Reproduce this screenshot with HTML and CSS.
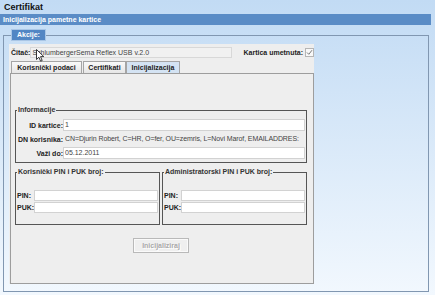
FILE: index.html
```html
<!DOCTYPE html>
<html lang="hr">
<head>
  <meta charset="UTF-8">
  <title>Certifikat</title>
  <link rel="stylesheet" href="styles.css">
</head>
<body>

  <div class="app-title">Certifikat</div>
  <div class="title-bar">Inicijalizacija pametne kartice</div>

  <fieldset class="actions">
    <legend class="actions-legend">Akcije:</legend>
    <div class="card-panel">

      <div class="reader-row">
        <span class="label">Čitač:</span>
        <span class="reader-field">SchlumbergerSema Reflex USB v.2.0</span>
        <span class="label inserted">Kartica umetnuta:</span>
        <span class="checkbox">
          <svg width="7" height="7" viewBox="0 0 7 7"><path d="M1 3.5 L2.8 5.3 L6 1.2" fill="none" stroke="#7a7a7a" stroke-width="1"/></svg>
        </span>
        <svg class="cursor" width="9" height="13" viewBox="0 0 9 13">
          <path d="M0.5 0.5 L0.5 10.5 L2.9 8.2 L4.6 12.2 L6.2 11.5 L4.5 7.6 L7.8 7.6 Z" fill="#fff" stroke="#222" stroke-width="0.9" stroke-linejoin="round"/>
        </svg>
      </div>

      <div class="tabs">
        <span class="tab tab-user">Korisnički podaci</span>
        <span class="tab tab-certs">Certifikati</span>
        <span class="tab tab-init active">Inicijalizacija</span>
      </div>

      <div class="tab-body">
        <fieldset class="group info">
          <legend>Informacije</legend>
          <div class="form-row">
            <span class="field-label">ID kartice:</span>
            <span class="input">1</span>
          </div>
          <div class="form-row">
            <span class="field-label">DN korisnika:</span>
            <span class="input readonly">CN=Djurin Robert, C=HR, O=fer, OU=zemris, L=Novi Marof, EMAILADDRES:</span>
          </div>
          <div class="form-row">
            <span class="field-label">Važi do:</span>
            <span class="input">05.12.2011</span>
          </div>
        </fieldset>

        <div class="pin-groups">
          <fieldset class="group pin">
            <legend>Korisnički PIN i PUK broj:</legend>
            <div class="form-row">
              <span class="pin-label">PIN:</span>
              <span class="input"></span>
            </div>
            <div class="form-row">
              <span class="pin-label">PUK:</span>
              <span class="input"></span>
            </div>
          </fieldset>
          <fieldset class="group pin">
            <legend>Administratorski PIN i PUK broj:</legend>
            <div class="form-row">
              <span class="pin-label">PIN:</span>
              <span class="input"></span>
            </div>
            <div class="form-row">
              <span class="pin-label">PUK:</span>
              <span class="input"></span>
            </div>
          </fieldset>
        </div>

        <button class="init-btn" disabled>Inicijaliziraj</button>
      </div>

    </div>
  </fieldset>

</body>
</html>
```

FILE: styles.css
```css
body {
  margin: 0;
  width: 435px;
  height: 295px;
  overflow: hidden;
  background: linear-gradient(#c2dbf4, #f2f8fe);
  font-family: "Liberation Sans", Arial, sans-serif;
  font-size: 7px;
  color: #222;
}

.app-title {
  height: 14px;
  line-height: 14px;
  padding-left: 4px;
  font-size: 9px;
  font-weight: bold;
  color: #111;
}

.title-bar {
  height: 11px;
  line-height: 11px;
  margin-right: 4px;
  padding-left: 3px;
  background: #5a8cc6;
  color: #fff;
  font-weight: bold;
}

.actions {
  margin: 4px 6px 0 3px;
  padding: 3px 0 7px 5px;
  border: 1px solid #8197b1;
  min-width: 0;
}

.actions-legend {
  margin-left: 2px;
  padding: 0 5px;
  height: 12px;
  line-height: 10px;
  box-sizing: border-box;
  background: #5286c4;
  border: 1px solid #a9c6e6;
  color: #fff;
  font-weight: bold;
}

.card-panel {
  position: relative;
  width: 305px;
  height: 240px;
  padding-top: 3px;
  box-sizing: border-box;
  background: #eeeeee;
  display: flex;
  flex-direction: column;
}

.label { font-weight: bold; }

.reader-row {
  display: flex;
  align-items: center;
  height: 11px;
  padding-left: 2px;
}

.reader-field {
  width: 202px;
  height: 11px;
  padding-left: 1px;
  box-sizing: border-box;
  background: #f1f1f1;
  border: 1px solid #d8d8d8;
  line-height: 9px;
  color: #444;
  white-space: nowrap;
}

.inserted { margin-left: 11px; }

.checkbox {
  width: 9px;
  height: 9px;
  margin-left: 2px;
  box-sizing: border-box;
  border: 1px solid #b5b5b5;
  background: #f8f8f8;
  display: flex;
}

.cursor {
  position: absolute;
  left: 27px;
  top: 5px;
}

.tabs {
  display: flex;
  height: 12px;
  margin-top: 3px;
  padding-left: 2px;
}

.tab {
  height: 12px;
  box-sizing: border-box;
  border: 1px solid #a5a5a5;
  border-bottom: none;
  background: linear-gradient(#f9f9f9, #e6e6e6);
  font-weight: bold;
  line-height: 11px;
  text-align: center;
}

.tab-user { width: 71px; margin-right: 1px; }
.tab-certs { width: 43px; }
.tab-init { width: 54px; }
.tab.active { background: #d4e3f3; }

.tab-body {
  flex: 1;
  margin-left: 1px;
  padding: 32px 6px 0 4px;
  box-sizing: border-box;
  border: 1px solid #9d9d9d;
}

.group {
  margin: 0;
  min-width: 0;
  border: 1px solid #555;
}

.group legend {
  padding: 0 1px;
  line-height: 8px;
  font-weight: bold;
  color: #333;
}

.info { padding: 5px 1px 3px 1px; }

.form-row {
  display: flex;
  align-items: center;
  height: 12px;
  margin-bottom: 2px;
}
.form-row:last-of-type { margin-bottom: 0; }

.field-label {
  width: 46px;
  text-align: right;
  font-weight: bold;
}

.input {
  flex: 1;
  min-width: 0;
  height: 12px;
  padding-left: 1px;
  box-sizing: border-box;
  background: #fff;
  border: 1px solid #d2d2d2;
  line-height: 10px;
  color: #444;
  white-space: nowrap;
  overflow: hidden;
}

.input.readonly {
  background: transparent;
  border-color: transparent;
  letter-spacing: -0.1px;
  overflow: visible;
}

.pin-groups {
  display: flex;
  gap: 2px;
  margin-top: 5px;
}

.pin {
  flex: 1;
  padding: 14px 1px 10px 1px;
}

.pin .form-row { height: 11px; margin-bottom: 1px; }
.pin .input { height: 11px; line-height: 9px; }

.pin-label {
  width: 17px;
  font-weight: bold;
}

.init-btn {
  display: block;
  width: 56px;
  height: 15px;
  margin: 13px auto 0;
  padding: 0;
  font: inherit;
  font-weight: bold;
  color: #a9a9a9;
  text-shadow: 1px 1px 0 #fff;
  background: #efefef;
  border: 1px solid #b9b9b9;
  box-shadow: inset 0 0 0 1px #fafafa;
}
```
